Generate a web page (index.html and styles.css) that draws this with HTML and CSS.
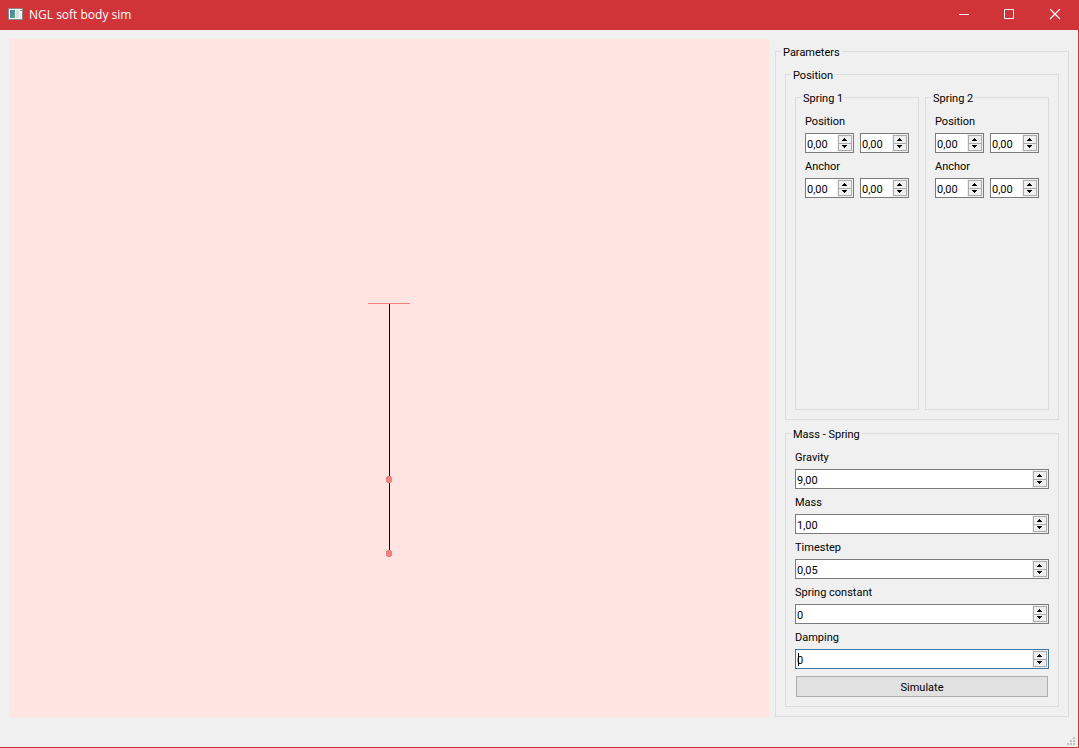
FILE: index.html
```html
<!DOCTYPE html>
<html lang="en">
<head>
<meta charset="utf-8">
<title>NGL soft body sim</title>
<link rel="stylesheet" href="styles.css">
</head>
<body>
<svg class="defs" width="0" height="0" aria-hidden="true">
  <symbol id="up" viewBox="0 0 12 7"><path d="M5 2h1v1h1v1h1v1H3V4h1V3h1z"/></symbol>
  <symbol id="down" viewBox="0 0 12 6"><path d="M3 1h5v1H7v1H6v1H5V3H4V2H3z"/></symbol>
</svg>
<div class="window">
  <header class="titlebar">
    <svg class="app-icon" width="16" height="14" viewBox="0 0 16 14" aria-hidden="true">
      <defs><linearGradient id="pane" x1="0" y1="0" x2="1" y2="1"><stop offset="0" stop-color="#4b78ad"/><stop offset="1" stop-color="#55b07c"/></linearGradient></defs>
      <rect x="0" y="0" width="15" height="12" fill="#8d8588"/>
      <rect x="1" y="1" width="13" height="10" fill="#f7f7f7"/>
      <rect x="2" y="2" width="5" height="8" fill="url(#pane)"/>
      <rect x="8" y="2" width="3" height="8" fill="#d8dcdc"/>
      <rect x="12" y="2" width="2" height="1" fill="#67a58a"/>
      <rect x="12" y="5" width="1" height="5" fill="#e3e6e6"/>
    </svg>
    <h1 class="title">NGL soft body sim</h1>
    <button class="win-button" type="button" aria-label="Minimize"><svg width="12" height="12" viewBox="0 0 12 12"><path d="M2 5h10v1H2z" fill="#fff"/></svg></button>
    <button class="win-button" type="button" aria-label="Maximize"><svg width="12" height="12" viewBox="0 0 12 12"><path d="M1.500 .500h9v9h-9z" fill="none" stroke="#fff"/></svg></button>
    <button class="win-button" type="button" aria-label="Close"><svg width="12" height="12" viewBox="0 0 12 12"><path d="M1 0l10 10M11 0L1 10" fill="none" stroke="#fff" stroke-width="1.200"/></svg></button>
  </header>

  <main class="content">
    <section class="scene" aria-label="Simulation view">
      <svg class="scene-view" viewBox="0 0 760 678">
        <path d="M359 264h42v1h-42z" fill="#f08080"/>
        <path d="M380 265h1v249h-1z" fill="#000"/>
        <path d="M378 437h4v1h1v5h-1v1h-4v-1h-1v-5h1z" fill="#f08080"/>
        <path d="M378 511h4v1h1v5h-1v1h-4v-1h-1v-5h1z" fill="#f08080"/>
      </svg>
    </section>

    <fieldset class="group parameters">
      <legend>Parameters</legend>
      <fieldset class="group position">
        <legend>Position</legend>
        <fieldset class="group spring">
          <legend>Spring 1</legend>
          <div class="field">
            <label for="s1px">Position</label>
            <div class="pair">
              <div class="spin"><input id="s1px" value="0,00"><div class="steps"><button type="button" class="up" aria-label="Increase"><svg><use href="#up"/></svg></button><button type="button" class="down" aria-label="Decrease"><svg><use href="#down"/></svg></button></div></div>
              <div class="spin"><input aria-label="Position Y" value="0,00"><div class="steps"><button type="button" class="up" aria-label="Increase"><svg><use href="#up"/></svg></button><button type="button" class="down" aria-label="Decrease"><svg><use href="#down"/></svg></button></div></div>
            </div>
          </div>
          <div class="field">
            <label for="s1ax">Anchor</label>
            <div class="pair">
              <div class="spin"><input id="s1ax" value="0,00"><div class="steps"><button type="button" class="up" aria-label="Increase"><svg><use href="#up"/></svg></button><button type="button" class="down" aria-label="Decrease"><svg><use href="#down"/></svg></button></div></div>
              <div class="spin"><input aria-label="Anchor Y" value="0,00"><div class="steps"><button type="button" class="up" aria-label="Increase"><svg><use href="#up"/></svg></button><button type="button" class="down" aria-label="Decrease"><svg><use href="#down"/></svg></button></div></div>
            </div>
          </div>
        </fieldset>
        <fieldset class="group spring">
          <legend>Spring 2</legend>
          <div class="field">
            <label for="s2px">Position</label>
            <div class="pair">
              <div class="spin"><input id="s2px" value="0,00"><div class="steps"><button type="button" class="up" aria-label="Increase"><svg><use href="#up"/></svg></button><button type="button" class="down" aria-label="Decrease"><svg><use href="#down"/></svg></button></div></div>
              <div class="spin"><input aria-label="Position Y" value="0,00"><div class="steps"><button type="button" class="up" aria-label="Increase"><svg><use href="#up"/></svg></button><button type="button" class="down" aria-label="Decrease"><svg><use href="#down"/></svg></button></div></div>
            </div>
          </div>
          <div class="field">
            <label for="s2ax">Anchor</label>
            <div class="pair">
              <div class="spin"><input id="s2ax" value="0,00"><div class="steps"><button type="button" class="up" aria-label="Increase"><svg><use href="#up"/></svg></button><button type="button" class="down" aria-label="Decrease"><svg><use href="#down"/></svg></button></div></div>
              <div class="spin"><input aria-label="Anchor Y" value="0,00"><div class="steps"><button type="button" class="up" aria-label="Increase"><svg><use href="#up"/></svg></button><button type="button" class="down" aria-label="Decrease"><svg><use href="#down"/></svg></button></div></div>
            </div>
          </div>
        </fieldset>
      </fieldset>

      <fieldset class="group mass">
        <legend>Mass - Spring</legend>
        <div class="field">
          <label for="gravity">Gravity</label>
          <div class="spin"><input id="gravity" value="9,00"><div class="steps"><button type="button" class="up" aria-label="Increase"><svg><use href="#up"/></svg></button><button type="button" class="down" aria-label="Decrease"><svg><use href="#down"/></svg></button></div></div>
        </div>
        <div class="field">
          <label for="mass">Mass</label>
          <div class="spin"><input id="mass" value="1,00"><div class="steps"><button type="button" class="up" aria-label="Increase"><svg><use href="#up"/></svg></button><button type="button" class="down" aria-label="Decrease"><svg><use href="#down"/></svg></button></div></div>
        </div>
        <div class="field">
          <label for="timestep">Timestep</label>
          <div class="spin"><input id="timestep" value="0,05"><div class="steps"><button type="button" class="up" aria-label="Increase"><svg><use href="#up"/></svg></button><button type="button" class="down" aria-label="Decrease"><svg><use href="#down"/></svg></button></div></div>
        </div>
        <div class="field">
          <label for="constant">Spring constant</label>
          <div class="spin"><input id="constant" value="0"><div class="steps"><button type="button" class="up" aria-label="Increase"><svg><use href="#up"/></svg></button><button type="button" class="down" aria-label="Decrease"><svg><use href="#down"/></svg></button></div></div>
        </div>
        <div class="field">
          <label for="damping">Damping</label>
          <div class="spin active"><input id="damping" value="0"><span class="caret"></span><div class="steps"><button type="button" class="up" aria-label="Increase"><svg><use href="#up"/></svg></button><button type="button" class="down" aria-label="Decrease"><svg><use href="#down"/></svg></button></div></div>
        </div>
        <button class="simulate" type="button">Simulate</button>
      </fieldset>
    </fieldset>
  </main>

  <footer class="statusbar">
    <svg class="grip" width="8" height="8" viewBox="0 0 8 8" aria-hidden="true"><path d="M6 0h2v2H6zM3 3h2v2H3zM6 3h2v2H6zM0 6h2v2H0zM3 6h2v2H3zM6 6h2v2H6z" fill="#bfbfbf"/></svg>
  </footer>
</div>
</body>
</html>
```

FILE: styles.css
```css
* {
  box-sizing: border-box;
}

body {
  margin: 0;
  color: #000;
  font-family: Roboto, "Open Sans", sans-serif;
  font-size: 11px;
  line-height: 15px;
}

button,
input {
  margin: 0;
  padding: 0;
  border: 0;
  border-radius: 0;
  outline: 0;
  background: none;
  color: inherit;
  font: inherit;
}

svg {
  display: block;
}

.defs {
  position: absolute;
}

.window {
  display: flex;
  flex-direction: column;
  min-height: 100vh;
  border: solid #d13438;
  border-width: 0 1px 1px 0;
  background: #f0f0f0;
}

.titlebar {
  display: flex;
  align-items: center;
  height: 30px;
  padding-left: 8px;
  background: #d13438;
  color: #fff;
}

.title {
  flex: 1;
  margin: 0 0 0 5px;
  font-family: "Open Sans", "Noto Sans", sans-serif;
  font-size: 12px;
  font-weight: 400;
  line-height: 16px;
}

.win-button {
  display: flex;
  align-items: center;
  justify-content: center;
  width: 46px;
  height: 30px;
}

.content {
  display: flex;
  flex: 1;
  gap: 6px;
  padding: 9px 9px 0;
}

.scene {
  display: flex;
  flex: 1;
  background: #ffe4e1;
}

.scene-view {
  flex: 1;
  width: 100%;
  min-width: 0;
}

.group {
  display: flex;
  flex-direction: column;
  gap: 6px;
  min-width: 0;
  margin: 0;
  padding: 10px 9px 9px;
  border: 1px solid #dcdcdc;
}

.group > legend {
  height: 13px;
  margin-left: -4px;
  padding: 0 2px;
  line-height: 15px;
}

.parameters {
  gap: 7px;
  width: 294px;
  margin-top: 6px;
}

.position {
  flex: 1;
  flex-direction: row;
}

.spring {
  flex: 1;
}

.field {
  display: flex;
  flex-direction: column;
  gap: 4px;
}

.pair {
  display: grid;
  grid-template-columns: repeat(2, minmax(0, 1fr));
  gap: 6px;
}

.spin {
  position: relative;
  display: flex;
  height: 20px;
  border: 1px solid #7a7a7a;
  background: #fff;
}

.spin.active {
  border-color: #3f76a3;
}

.spin input {
  flex: 1;
  min-width: 0;
  padding: 2px 0 0 1px;
}

.caret {
  position: absolute;
  top: 3px;
  left: 2px;
  width: 1px;
  height: 13px;
  background: #000;
}

.steps {
  display: flex;
  flex-direction: column;
  width: 16px;
  padding: 1px;
  background: #f0f0f0;
}

.steps button {
  border: 1px solid #acacac;
  background: #efefef;
}

.steps .up {
  height: 9px;
}

.steps .down {
  height: 7px;
  border-top: 0;
}

.steps svg {
  width: 12px;
  height: 7px;
}

.steps .down svg {
  height: 6px;
}

.simulate {
  height: 21px;
  margin: 1px 1px 0;
  padding-top: 2px;
  border: 1px solid #adadad;
  background: #e1e1e1;
}

.statusbar {
  display: flex;
  align-items: flex-end;
  justify-content: flex-end;
  height: 30px;
  padding: 0 3px 2px 0;
}
```
